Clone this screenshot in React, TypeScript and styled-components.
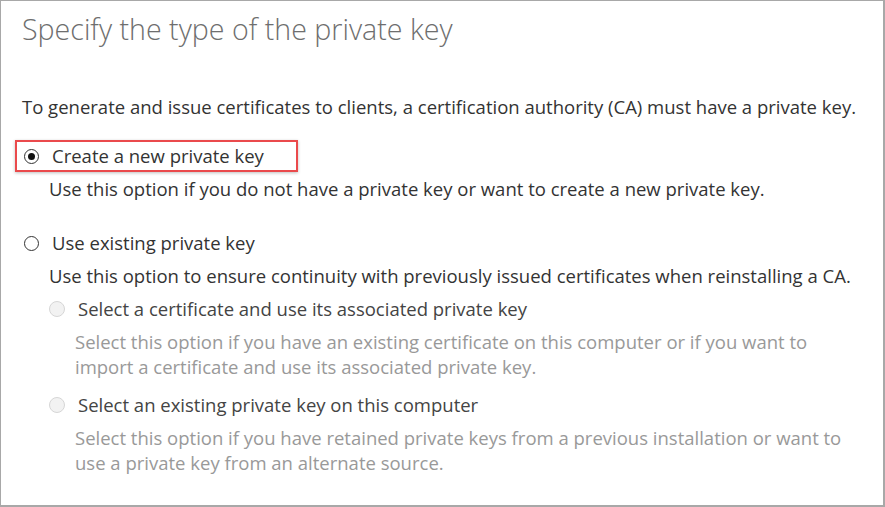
import React from 'react';
import styled, { createGlobalStyle } from 'styled-components';

const GlobalStyle = createGlobalStyle`
  html, body {
    margin: 0;
    padding: 0;
    background: #ffffff;
  }
  body {
    font-family: "Open Sans", "Noto Sans", "Liberation Sans", sans-serif;
  }
`;

const Frame = styled.div`
  width: 885px;
  height: 507px;
  box-sizing: border-box;
  border: 1px solid #a8a8a8;
  border-right-width: 2px;
  border-bottom-width: 2px;
  padding: 8px 0 0 21px;
  background: #fff;
  overflow: hidden;
`;

const Title = styled.h1`
  margin: 0;
  font-size: 28.6px;
  font-weight: 300;
  color: #6e6e6e;
  line-height: 40px;
`;

const Intro = styled.p`
  margin: 45px 0 0 0;
  font-size: 18.5px;
  color: #333;
  line-height: 25px;
  white-space: nowrap;
`;

const Group = styled.div<{ indent?: number; gap?: number }>`
  display: flex;
  flex-direction: column;
  margin-left: ${p => p.indent ?? 0}px;
  margin-top: ${p => p.gap ?? 0}px;
`;

const Option = styled.div<{ gap?: number }>`
  display: flex;
  flex-direction: column;
  margin-top: ${p => p.gap ?? 0}px;
`;

const OptionRow = styled.label<{ highlighted?: boolean; disabled?: boolean }>`
  display: inline-flex;
  align-self: flex-start;
  align-items: center;
  gap: 13px;
  font-size: 18.5px;
  line-height: 24px;
  color: ${p => (p.disabled ? '#444' : '#333')};
  padding: 2px 32px 2px 7px;
  margin-left: -7px;
  border: 2px solid ${p => (p.highlighted ? '#ea4a4c' : 'transparent')};
  box-shadow: ${p => (p.highlighted ? '0 1px 3px rgba(0,0,0,0.25)' : 'none')};
  white-space: nowrap;
`;

const Radio = styled.span<{ checked?: boolean; disabled?: boolean }>`
  width: ${p => (p.disabled ? 16 : 15)}px;
  height: ${p => (p.disabled ? 16 : 15)}px;
  margin-left: ${p => (p.disabled ? -1 : 0)}px;
  box-sizing: border-box;
  border-radius: 50%;
  border: 1px solid ${p => (p.disabled ? '#d6d6d6' : '#333')};
  background: ${p => (p.disabled ? '#f2f2f2' : '#fff')};
  display: flex;
  align-items: center;
  justify-content: center;
  flex-shrink: 0;
  &::after {
    content: '';
    width: 7px;
    height: 7px;
    border-radius: 50%;
    background: ${p => (p.checked ? '#111' : 'transparent')};
  }
`;

const Desc = styled.p<{ disabled?: boolean }>`
  margin: 4px 0 0 27px;
  font-size: 18.5px;
  line-height: 25px;
  white-space: nowrap;
  color: ${p => (p.disabled ? '#999' : '#333')};
`;

export default function App() {
  return (
    <>
      <GlobalStyle />
      <Frame>
        <Title>Specify the type of the private key</Title>
        <Intro>
          To generate and issue certificates to clients, a certification authority (CA) must have a private key.
        </Intro>
        <Group gap={21}>
          <Option>
            <OptionRow highlighted>
              <Radio checked />
              Create a new private key
            </OptionRow>
            <Desc>Use this option if you do not have a private key or want to create a new private key.</Desc>
          </Option>
          <Option gap={26}>
            <OptionRow>
              <Radio />
              Use existing private key
            </OptionRow>
            <Desc>Use this option to ensure continuity with previously issued certificates when reinstalling a CA.</Desc>
            <Group indent={26} gap={5}>
              <Option>
                <OptionRow disabled>
                  <Radio disabled />
                  Select a certificate and use its associated private key
                </OptionRow>
                <Desc disabled>
                  Select this option if you have an existing certificate on this computer or if you want to
                  <br />
                  import a certificate and use its associated private key.
                </Desc>
              </Option>
              <Option gap={10}>
                <OptionRow disabled>
                  <Radio disabled />
                  Select an existing private key on this computer
                </OptionRow>
                <Desc disabled>
                  Select this option if you have retained private keys from a previous installation or want to
                  <br />
                  use a private key from an alternate source.
                </Desc>
              </Option>
            </Group>
          </Option>
        </Group>
      </Frame>
    </>
  );
}
